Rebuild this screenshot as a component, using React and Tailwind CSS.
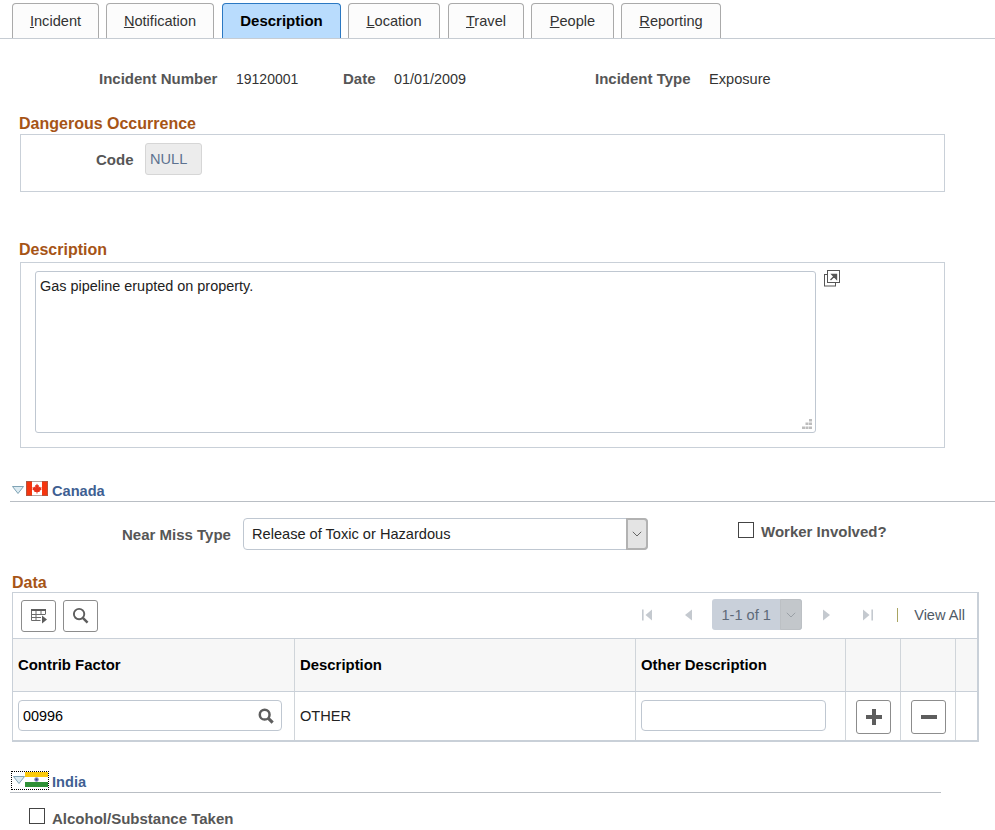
import React from "react";

const tabs = [
  ["I", "ncident", "w-[87px]", "ml-[12px]"],
  ["N", "otification", "w-[108px]", "ml-[7px]"],
  ["", "Description", "w-[119px]", "ml-[8px]"],
  ["L", "ocation", "w-[92px]", "ml-[7px]"],
  ["T", "ravel", "w-[76px]", "ml-[8px]"],
  ["P", "eople", "w-[83px]", "ml-[7px]"],
  ["R", "eporting", "w-[100px]", "ml-[7px]"],
];

function Tabs() {
  return (
    <div className="flex h-[39px] pt-[3px] border-b border-[#c6ccd3]">
      {tabs.map(([u, r, w, m]) =>
        u === "" ? (
          <div key={r} className={`${w} ${m} h-[35px] flex items-center justify-center rounded-t-[4px] border border-b-0 border-[#2b78c2] bg-[#b9dcfd] font-bold text-[15px] text-black`}>{r}</div>
        ) : (
          <div key={r} className={`${w} ${m} h-[35px] flex items-center justify-center rounded-t-[4px] border border-b-0 border-[#aaaaaa] bg-[#fcfcfc] text-[#333]`}>
            <span><span className="underline">{u}</span>{r}</span>
          </div>
        )
      )}
    </div>
  );
}

const Label = ({ className = "", children }) => (
  <span className={`font-bold text-[15px] text-[#565656] ${className}`}>{children}</span>
);

const Heading = ({ className = "", children }) => (
  <div className={`font-bold text-[16px] leading-[18px] text-[#a65416] ${className}`}>{children}</div>
);

function Tri() {
  return (
    <svg width="12" height="8" viewBox="0 0 12 8" className="shrink-0">
      <path d="M0.5 0.5H11.5L6 7.5Z" fill="#dcebf2" stroke="#7fa3b5" strokeWidth="1" />
    </svg>
  );
}

function Canada() {
  return (
    <svg width="22" height="15" viewBox="0 0 22 15" className="shrink-0">
      <rect width="22" height="15" fill="#ffffff" />
      <rect width="6" height="15" fill="#f5350e" />
      <rect x="16" width="6" height="15" fill="#f5350e" />
      <path d="M11 2.5l1 2 1-.5-.3 2.5 1.3-1 .4 1 1.3-.2-.5 1.5.6.4-2.3 1.8.3 1h-2.3v1.6h-1v-1.6H8.2l.3-1-2.3-1.8.6-.4-.5-1.5 1.3.2.4-1 1.3 1L9 4l1 .5z" fill="#e8321b" />
      <rect x="0.5" y="0.5" width="21" height="14" fill="none" stroke="#8a6a60" strokeWidth="0.6" />
    </svg>
  );
}

function India() {
  return (
    <svg width="23" height="15" viewBox="0 0 23 15" className="shrink-0">
      <rect width="23" height="5" fill="#fbc90c" />
      <rect y="5" width="23" height="5" fill="#ffffff" />
      <rect y="10" width="23" height="5" fill="#2f9137" />
      <circle cx="11.5" cy="7.5" r="2.2" fill="#7b7fb8" />
      <circle cx="11.5" cy="7.5" r="1" fill="#2e3a80" />
    </svg>
  );
}

function Check({ className = "" }) {
  return <div className={`w-[16px] h-[16px] border border-[#444] bg-white shrink-0 ${className}`} />;
}

function Chev({ color = "#666" }) {
  return (
    <svg width="10" height="6" viewBox="0 0 10 6">
      <path d="M0.8 0.8L5 5L9.2 0.8" fill="none" stroke={color} strokeWidth="1" />
    </svg>
  );
}

function Mag({ size = 18, color = "#5d5d5d", w = 2 }) {
  return (
    <svg width={size} height={size} viewBox="0 0 18 18">
      <circle cx="7.5" cy="7.5" r="5.5" fill="none" stroke={color} strokeWidth={w} />
      <path d="M11.7 11.7L16.5 16.5" stroke={color} strokeWidth={w + 0.6} />
    </svg>
  );
}

const IconBtn = ({ className = "", children }) => (
  <div className={`flex items-center justify-center w-[35px] h-[32px] rounded-[3px] border border-[#8c8c8c] bg-white ${className}`}>{children}</div>
);

function Pager() {
  return (
    <div className="flex items-center ml-auto mr-[12px] -mt-[2px] text-[#6b7480]">
      <svg width="14" height="14" viewBox="0 0 14 14">
        <rect x="1" y="1.5" width="1.6" height="11" fill="#c4c9cf" />
        <path d="M11 1.5V12.5L4.5 7Z" fill="#c4c9cf" />
      </svg>
      <svg width="12" height="14" viewBox="0 0 12 14" className="ml-[28px]">
        <path d="M9 1.5V12.5L2 7Z" fill="#c4c9cf" />
      </svg>
      <div className="ml-[17px] flex items-center h-[31px] w-[90px] rounded-[3px] bg-[#c9d0da]">
        <span className="w-[68px] text-center text-[#5e6a78]">1-1 of 1</span>
        <div className="flex items-center justify-center w-[22px] h-[31px] rounded-r-[3px] border border-[#bcc0c4] bg-[#c3c7cb]">
          <Chev color="#9aa0a6" />
        </div>
      </div>
      <svg width="12" height="14" viewBox="0 0 12 14" className="ml-[18px]">
        <path d="M3 1.5V12.5L10 7Z" fill="#c4c9cf" />
      </svg>
      <svg width="14" height="14" viewBox="0 0 14 14" className="ml-[28px]">
        <path d="M3 1.5V12.5L9.5 7Z" fill="#c4c9cf" />
        <rect x="11.4" y="1.5" width="1.6" height="11" fill="#c4c9cf" />
      </svg>
      <div className="ml-[23px] w-[1px] h-[14px] bg-[#a9a562]" />
      <span className="ml-[16px] text-[#4f5a66]">View All</span>
    </div>
  );
}

const cols = "grid grid-cols-[282px_341px_210px_55px_55px_1fr]";

function DataGrid() {
  const hc = "flex items-center pl-[5px] font-bold text-[14.9px] text-black border-r border-[#d0d5da] bg-[#f7f7f7]";
  const c = "flex items-start pt-[8px] border-r border-[#d0d5da]";
  return (
    <div className="ml-[12px] w-[967px] h-[150px] border border-[#c9d0d8] border-b-2 border-r-2">
      <div className="flex items-center h-[46px] pl-[8px] border-b border-[#c9d0d8]">
        <IconBtn>
          <svg width="18" height="18" viewBox="0 0 18 18">
            <path d="M1 2h15v2H1z" fill="#5d5d5d" />
            <path d="M1.5 4v9.5h9M6 4v9.5M11 4v4M15.5 4v3M1.5 7.5H15.5M1.5 10.5H11" fill="none" stroke="#6b6b6b" strokeWidth="1" />
            <path d="M12 8.5L17 12.5L12 16.5Z" fill="#5d5d5d" />
          </svg>
        </IconBtn>
        <IconBtn className="ml-[7px]"><Mag size={17} /></IconBtn>
        <Pager />
      </div>
      <div className={`${cols} h-[53px] border-b border-[#c9d0d8]`}>
        <div className={hc}>Contrib Factor</div>
        <div className={hc}>Description</div>
        <div className={hc}>Other Description</div>
        <div className={hc} />
        <div className={hc} />
        <div className={`${hc} border-r-0`} />
      </div>
      <div className={`${cols} h-[48px]`}>
        <div className={`${c} pl-[5px]`}>
          <div className="flex items-center justify-between w-[264px] h-[31px] rounded-[4px] border border-[#bfc7d1] pl-[4px] pr-[7px] text-[14.4px] text-black">
            <span>00996</span>
            <Mag size={16} w={2.8} />
          </div>
        </div>
        <div className={`${c} pl-[5px] pt-[16px] text-[#222]`}>OTHER</div>
        <div className={`${c} pl-[5px]`}>
          <div className="w-[185px] h-[31px] rounded-[4px] border border-[#bfc7d1]" />
        </div>
        <div className={`${c} pl-[10px]`}>
          <IconBtn className="h-[34px]">
            <svg width="16" height="16" viewBox="0 0 16 16"><path d="M6 0h4v6h6v4h-6v6H6v-6H0V6h6z" fill="#5d5d5d" /></svg>
          </IconBtn>
        </div>
        <div className={`${c} pl-[10px]`}>
          <IconBtn className="h-[34px]">
            <svg width="16" height="4" viewBox="0 0 16 4"><rect width="16" height="4" fill="#5d5d5d" /></svg>
          </IconBtn>
        </div>
        <div />
      </div>
    </div>
  );
}

export default function App() {
  return (
    <div className="w-[995px] h-[830px] overflow-hidden bg-white text-[14.6px] leading-[16px] text-[#333] font-['Liberation_Sans',Arial,sans-serif]">
      <Tabs />

      <div className="flex items-center h-[16px] mt-[32px] text-[#333]">
        <Label className="ml-[99px] w-[137px] text-[14.7px]">Incident Number</Label>
        <span className="w-[107px] text-[14px]">19120001</span>
        <Label className="w-[51px] text-[14.8px]">Date</Label>
        <span className="w-[201px] text-[14.4px]">01/01/2009</span>
        <Label className="w-[114px] text-[14.7px]">Incident Type</Label>
        <span>Exposure</span>
      </div>

      <Heading className="ml-[19px] mt-[28px]">Dangerous Occurrence</Heading>
      <div className="ml-[20px] mt-[1px] w-[925px] h-[58px] border border-[#c9d0d8] flex items-start pt-[8px]">
        <Label className="ml-[75px] w-[49px] mt-[9px]">Code</Label>
        <div className="w-[57px] h-[32px] rounded-[3px] border border-[#d6d6d6] bg-[#ececec] text-[#5d7290] pl-[4px] pt-[7px]">NULL</div>
      </div>

      <Heading className="ml-[19px] mt-[49px]">Description</Heading>
      <div className="ml-[20px] mt-[3px] w-[925px] h-[186px] border border-[#c9d0d8] flex items-start pt-[8px] pl-[14px]">
        <div className="relative w-[781px] h-[162px] rounded-[3px] border border-[#bfc7d1] pl-[4px] pr-[5px] pt-[6px] text-[14.45px] text-[#222]">
          Gas pipeline erupted on property.
          <svg width="12" height="12" viewBox="0 0 12 12" className="absolute right-[2px] bottom-[2px]">
            <path d="M8 1h3v2.5H8zM4.5 4.5h3V7h-3zM8 4.5h3V7H8zM1 8.5h3V11H1zM4.5 8.5h3V11h-3zM8 8.5h3V11H8z" fill="#bdbdbd" />
          </svg>
        </div>
        <svg width="16" height="17" viewBox="0 0 16 17" className="ml-[8px] -mt-[1px]">
          <rect x="0.5" y="4.5" width="11" height="11.5" fill="#fff" stroke="#555" />
          <rect x="3.5" y="0.5" width="12" height="12" fill="#fff" stroke="#555" />
          <path d="M6.5 10L11 5.5M8 4.5h4.5V9Z" fill="#555" stroke="#555" strokeWidth="1.4" />
        </svg>
      </div>

      <div className="ml-[10px] mt-[33px] h-[21px] border-b border-[#b9bec4] flex items-start pl-[2px]">
        <div className="mt-[5px]"><Tri /></div>
        <div className="ml-[2px]"><Canada /></div>
        <span className="ml-[4px] mt-[2px] font-bold text-[#3f5f92]">Canada</span>
      </div>

      <div className="flex items-start mt-[16px] h-[32px]">
        <Label className="ml-[122px] w-[121px] mt-[9px]">Near Miss Type</Label>
        <div className="flex w-[405px] h-[32px] rounded-[4px] border border-[#bfc7d1]">
          <span className="flex-1 pl-[8px] pt-[7px] text-[#222]">Release of Toxic or Hazardous</span>
          <div className="flex items-center justify-center w-[22px] -m-[1px] bg-[#e4e4e4] border-2 border-[#b2b2b2] rounded-r-[4px]">
            <Chev />
          </div>
        </div>
        <Check className="ml-[90px] mt-[4px]" />
        <Label className="ml-[7px] mt-[6px]">Worker Involved?</Label>
      </div>

      <Heading className="ml-[12px] mt-[24px] text-[15px]">Data</Heading>
      <div><DataGrid /></div>

      <div className="ml-[10px] mt-[29px] w-[931px] h-[22px] border-b border-[#b9bec4] flex items-start">
        <div className="relative ml-[1px] flex items-start w-[38px] h-[19px] outline-1 outline-dotted outline-black -outline-offset-1 pl-[2px] pt-[1px]">
          <div className="mt-[4px]"><Tri /></div>
          <India />
        </div>
        <span className="ml-[3px] mt-[3px] font-bold text-[#3f5f92]">India</span>
      </div>

      <div className="flex items-start mt-[15px]">
        <Check className="ml-[29px]" />
        <Label className="ml-[7px] mt-[3px] text-[14.5px]">Alcohol/Substance Taken</Label>
      </div>
    </div>
  );
}
